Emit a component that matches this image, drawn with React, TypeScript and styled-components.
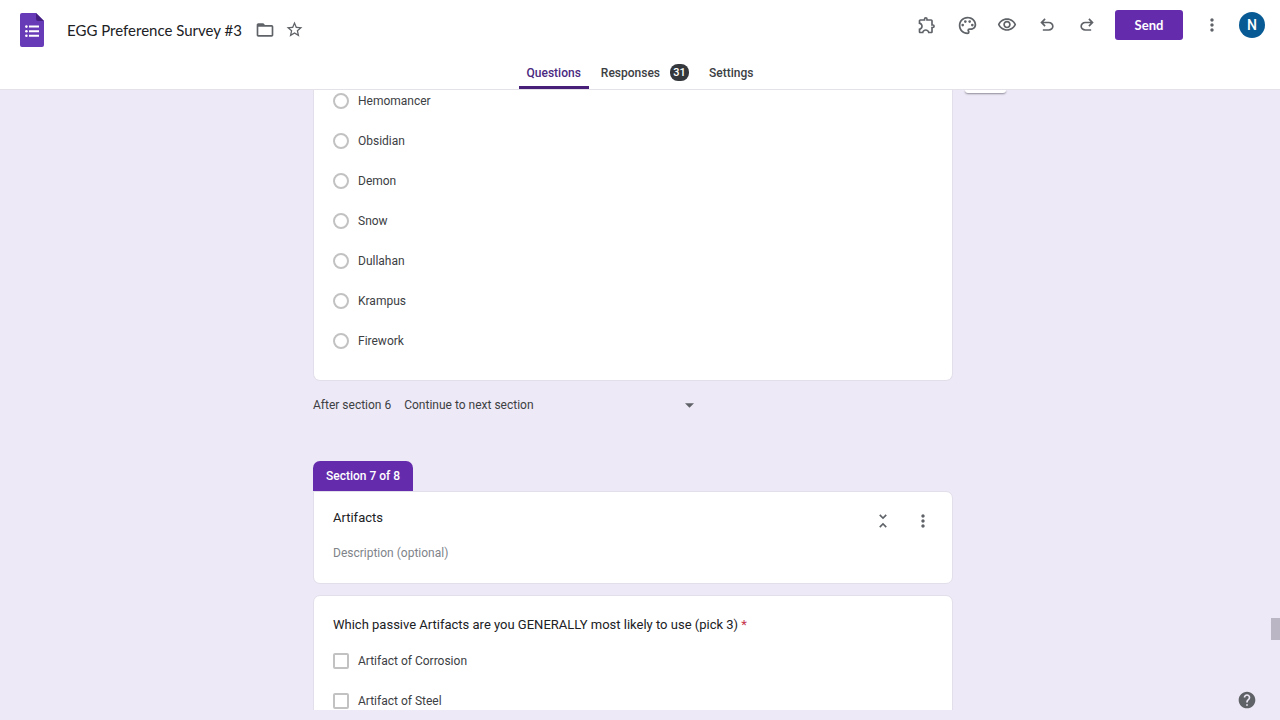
import React from "react";
import styled, { createGlobalStyle, css } from "styled-components";
import {
  MdFolderOpen,
  MdHelp,
  MdMoreVert,
  MdOutlineExtension,
  MdOutlinePalette,
  MdOutlineVisibility,
  MdStarBorder,
  MdUnfoldLess,
} from "react-icons/md";

const brandFont = `Lato, "Liberation Sans", sans-serif`;

const GlobalStyle = createGlobalStyle`
  *, *::before, *::after { box-sizing: border-box; }
  body {
    margin: 0;
    background: #eee9f6;
    color: #3c4043;
    font-family: Roboto, "Liberation Sans", sans-serif;
    font-size: 12px;
  }
  button, input, select { font: inherit; color: inherit; }
  h1, h2, h3, p { margin: 0; font-weight: 400; }
`;

const Page = styled.div`
  display: flex;
  flex-direction: column;
  height: 100vh;
  padding-bottom: 10px;
`;

const Header = styled.header`
  flex: none;
  background: #fff;
  border-bottom: 1px solid #e4e2e8;
`;

const HeaderBar = styled.div`
  display: flex;
  align-items: center;
  justify-content: space-between;
  height: 59px;
  padding: 0 8px 0 20px;
`;

const HeaderGroup = styled.div`
  display: flex;
  align-items: center;
`;

const Actions = styled(HeaderGroup)`
  align-self: flex-start;
  padding-top: 5px;
`;

const Logo = styled.svg`
  display: block;
  width: 24px;
  height: 34px;
  margin-right: 23px;
`;

const DocumentTitle = styled.h1`
  font-family: ${brandFont};
  font-size: 15px;
  line-height: 24px;
  color: #202124;
  margin-right: 8px;
`;

const IconButton = styled.button<{ $size?: number }>`
  display: flex;
  align-items: center;
  justify-content: center;
  width: ${(p) => p.$size ?? 40}px;
  height: ${(p) => p.$size ?? 40}px;
  padding: 0;
  border: 0;
  border-radius: 50%;
  background: none;
  color: #5f6368;
  cursor: pointer;
`;

const SendButton = styled.button`
  width: 68px;
  height: 30px;
  margin: 0 9px 0 8px;
  border: 0;
  border-radius: 3px;
  background: #642cad;
  color: #fff;
  font-family: ${brandFont};
  font-size: 13px;
  font-weight: 700;
  cursor: pointer;
`;

const Avatar = styled.button`
  width: 26px;
  height: 26px;
  margin: 0 7px;
  padding: 0;
  border: 0;
  border-radius: 50%;
  background: #075a93;
  color: #fff;
  font-size: 14px;
  font-weight: 500;
`;

const Tabs = styled.nav`
  display: flex;
  justify-content: center;
  gap: 4px;
  height: 30px;
`;

const Tab = styled.a<{ $active?: boolean }>`
  display: flex;
  align-items: center;
  gap: 10px;
  padding: 0 8px;
  border-bottom: 3px solid transparent;
  font-weight: 500;
  color: #3c4043;
  text-decoration: none;
  ${(p) =>
    p.$active &&
    css`
      color: #4b2a80;
      border-bottom-color: #48207a;
    `}
`;

const Badge = styled.span`
  min-width: 19px;
  padding: 0 3px;
  border-radius: 8px;
  background: #34383c;
  color: #fff;
  font-size: 11px;
  line-height: 17px;
  text-align: center;
`;

const Workspace = styled.main`
  display: grid;
  grid-template-columns: 1fr minmax(0, 640px) 1fr;
  align-items: start;
  flex: 1;
  min-height: 0;
  padding-right: 14px;
  overflow: hidden;
`;

const Column = styled.div`
  grid-column: 2;
`;

const SideToolbar = styled.aside`
  width: 41px;
  height: 3px;
  margin-left: 12px;
  border-radius: 0 0 6px 6px;
  background: #fff;
  box-shadow: 0 1px 2px #8f8b99;
`;

const Card = styled.section<{ $continued?: boolean }>`
  background: #fff;
  border: 1px solid #e2deea;
  border-radius: 7px;
  padding: 19px;
  ${(p) =>
    p.$continued &&
    css`
      border-top: 0;
      border-radius: 0 0 7px 7px;
      padding: 3px 19px 31px;
    `}
`;

const SectionCard = styled(Card)`
  display: flex;
  justify-content: space-between;
  height: 93px;
  padding: 9px 9px 9px 19px;
  border-top-left-radius: 0;
`;

const QuestionCard = styled(Card)`
  margin-top: 11px;
`;

const Options = styled.div`
  display: flex;
  flex-direction: column;
  gap: 24px;
`;

const Option = styled.label`
  display: flex;
  align-items: center;
  gap: 9px;
  height: 16px;
  line-height: 16px;
`;

const Choice = styled.input`
  appearance: none;
  flex: none;
  width: 16px;
  height: 16px;
  margin: 0;
  border: 2px solid #c2c2c2;
  border-radius: ${(p) => (p.type === "radio" ? "50%" : "2px")};
  background: #fff;
`;

const NextStep = styled.div`
  display: flex;
  align-items: center;
  gap: 13px;
  height: 48px;
  margin-bottom: 32px;
`;

const SelectBox = styled.div`
  display: grid;
  grid-template-columns: 296px;
  align-items: center;
`;

const Select = styled.select`
  grid-area: 1 / 1;
  appearance: none;
  padding: 0;
  border: 0;
  background: none;
`;

const Arrow = styled.svg`
  grid-area: 1 / 1;
  justify-self: end;
  width: 9px;
  height: 5px;
  margin-right: 6px;
  fill: #5f6368;
  pointer-events: none;
`;

const SectionTag = styled.p`
  width: fit-content;
  padding: 0 13px;
  border-radius: 7px 7px 0 0;
  background: #642cad;
  color: #fff;
  font-weight: 500;
  line-height: 30px;
`;

const SectionText = styled.div`
  flex: 1;
`;

const SectionTitle = styled.h2`
  margin: 7px 0 15px;
  font-size: 13px;
  line-height: 20px;
  color: #202124;
`;

const DescriptionInput = styled.input`
  display: block;
  width: 100%;
  height: 20px;
  padding: 0;
  border: 0;
  background: none;
  &::placeholder { color: #80848a; opacity: 1; }
`;

const QuestionTitle = styled.h3`
  margin-bottom: 18px;
  font-size: 13px;
  line-height: 20px;
  color: #202124;
`;

const Required = styled.span`
  color: #c5324a;
`;

const ScrollThumb = styled.div`
  position: fixed;
  right: 0;
  top: 618px;
  width: 9px;
  height: 22px;
  background: #bab6c4;
`;

const HelpButton = styled(IconButton)`
  position: fixed;
  right: 23px;
  bottom: 10px;
`;

const FormsLogo = () => (
  <Logo viewBox="0 0 24 34" aria-hidden="true">
    <path d="M2 0h14l8 8v24a2 2 0 0 1-2 2H2a2 2 0 0 1-2-2V2a2 2 0 0 1 2-2Z" fill="#673ab7" />
    <path d="m16 0 8 8h-6a2 2 0 0 1-2-2Z" fill="#452080" />
    <g fill="#fff">
      <circle cx="6.4" cy="13.6" r="1.3" />
      <circle cx="6.4" cy="18.2" r="1.3" />
      <circle cx="6.4" cy="22.8" r="1.3" />
      <path d="M9 12.6h10v2H9zM9 17.2h10v2H9zM9 21.8h10v2H9z" />
    </g>
  </Logo>
);

const HistoryIcon = ({ redo = false }: { redo?: boolean }) => (
  <svg width="20" height="20" viewBox="0 -960 960 960" fill="currentColor" aria-hidden="true">
    <path
      d={
        redo
          ? "M396-200q-97 0-166.5-63T160-420q0-94 69.5-157T396-640h252L544-744l56-56 200 200-200 200-56-56 104-104H396q-63 0-109.5 40T240-420q0 60 46.5 100T396-280h284v80H396Z"
          : "M280-200v-80h284q63 0 109.5-40T720-420q0-60-46.5-100T564-560H312l104 104-56 56-200-200 200-200 56 56-104 104h252q97 0 166.5 63T800-420q0 94-69.5 157T564-200H280Z"
      }
    />
  </svg>
);

const classes = ["Hemomancer", "Obsidian", "Demon", "Snow", "Dullahan", "Krampus", "Firework"];
const artifacts = ["Artifact of Corrosion", "Artifact of Steel"];

export default function App() {
  return (
    <>
      <GlobalStyle />
      <Page>
        <Header>
          <HeaderBar>
            <HeaderGroup>
              <FormsLogo />
              <DocumentTitle>EGG Preference Survey #3</DocumentTitle>
              <IconButton $size={30} aria-label="Move to folder"><MdFolderOpen size={20} /></IconButton>
              <IconButton $size={30} aria-label="Star"><MdStarBorder size={19} /></IconButton>
            </HeaderGroup>
            <Actions>
              <IconButton aria-label="Add-ons"><MdOutlineExtension size={20} /></IconButton>
              <IconButton aria-label="Customize theme"><MdOutlinePalette size={21} /></IconButton>
              <IconButton aria-label="Preview"><MdOutlineVisibility size={20} /></IconButton>
              <IconButton aria-label="Undo"><HistoryIcon /></IconButton>
              <IconButton aria-label="Redo"><HistoryIcon redo /></IconButton>
              <SendButton>Send</SendButton>
              <IconButton aria-label="More"><MdMoreVert size={20} /></IconButton>
              <Avatar aria-label="Account">N</Avatar>
            </Actions>
          </HeaderBar>
          <Tabs>
            <Tab href="#questions" $active>Questions</Tab>
            <Tab href="#responses">Responses<Badge>31</Badge></Tab>
            <Tab href="#settings">Settings</Tab>
          </Tabs>
        </Header>

        <Workspace>
          <Column>
            <Card $continued>
              <Options>
                {classes.map((name) => (
                  <Option key={name}>
                    <Choice type="radio" name="class" />
                    {name}
                  </Option>
                ))}
              </Options>
            </Card>

            <NextStep>
              <label htmlFor="after-section">After section 6</label>
              <SelectBox>
                <Select id="after-section">
                  <option>Continue to next section</option>
                </Select>
                <Arrow viewBox="0 0 10 5" aria-hidden="true"><path d="M0 0h10L5 5Z" /></Arrow>
              </SelectBox>
            </NextStep>

            <SectionTag>Section 7 of 8</SectionTag>
            <SectionCard>
              <SectionText>
                <SectionTitle>Artifacts</SectionTitle>
                <DescriptionInput placeholder="Description (optional)" aria-label="Description" />
              </SectionText>
              <IconButton aria-label="Collapse section"><MdUnfoldLess size={20} /></IconButton>
              <IconButton aria-label="Section options"><MdMoreVert size={20} /></IconButton>
            </SectionCard>

            <QuestionCard>
              <QuestionTitle>
                Which passive Artifacts are you GENERALLY most likely to use (pick 3) <Required>*</Required>
              </QuestionTitle>
              <Options>
                {artifacts.map((name) => (
                  <Option key={name}>
                    <Choice type="checkbox" name="artifact" />
                    {name}
                  </Option>
                ))}
              </Options>
            </QuestionCard>
          </Column>
          <SideToolbar />
        </Workspace>
      </Page>
      <ScrollThumb />
      <HelpButton $size={20} aria-label="Help"><MdHelp size={20} /></HelpButton>
    </>
  );
}
